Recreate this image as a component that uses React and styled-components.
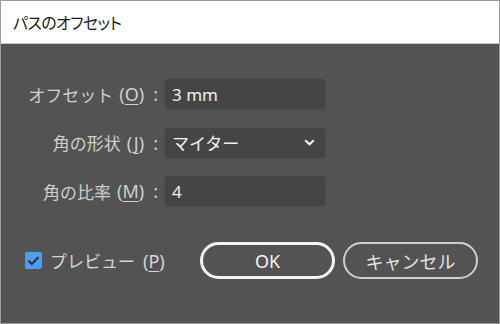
import React from 'react'
import styled, { createGlobalStyle } from 'styled-components'

const GlobalStyle = createGlobalStyle`
  html, body {
    margin: 0;
    padding: 0;
    background: #535353;
  }
  body {
    font-family: "Noto Sans", "Noto Sans CJK JP", sans-serif;
  }
`

const Window = styled.div`
  width: 500px;
  height: 324px;
  box-sizing: border-box;
  border: 1px solid #9b9b9b;
  display: flex;
  flex-direction: column;
  background: #535353;
`

const TitleBar = styled.div`
  height: 42px;
  flex: none;
  background: #ffffff;
  border-bottom: 1px solid #c4c4c4;
  display: flex;
  align-items: center;
  padding-left: 12px;
  font-size: 16px;
  font-feature-settings: "palt";
  letter-spacing: -0.6px;
  color: #1a1a1a;
`

const Body = styled.div`
  flex: 1;
  display: flex;
  flex-direction: column;
  padding-top: 34px;
`

const Form = styled.div`
  display: grid;
  grid-template-columns: 157px 162px;
  grid-auto-rows: 32px;
  column-gap: 6px;
  row-gap: 16.5px;
`

const Label = styled.div`
  display: flex;
  align-items: center;
  justify-content: flex-end;
  font-size: 17px;
  color: #cfcfcf;
  white-space: nowrap;
`

const Paren = styled.span`
  margin-left: ${p => p.$gap || 6}px;
  font-size: 18px;
`

const Key = styled.span`
  text-decoration: underline;
  text-underline-offset: 3px;
  text-decoration-thickness: 1px;
  text-decoration-skip-ink: none;
`

const Colon = styled.span`
  margin-left: 9px;
  font-size: 18px;
`

const Field = styled.div`
  box-sizing: border-box;
  display: flex;
  align-items: center;
  justify-content: space-between;
  padding: 0 10px 0 7px;
  background: #454545;
  border: 1px solid #4f4f4f;
  border-radius: 4px;
  font-size: 17px;
  color: #f2f2f2;
`

const Footer = styled.div`
  display: flex;
  align-items: center;
  justify-content: space-between;
  margin-top: 35px;
  padding: 0 21px 0 24px;
`

const Check = styled.label`
  display: flex;
  align-items: center;
  gap: 8px;
  font-size: 17px;
  color: #d6d6d6;
  white-space: nowrap;
`

const Box = styled.span`
  width: 17px;
  height: 17px;
  border-radius: 2px;
  background: #4b9ef2;
  display: flex;
  align-items: center;
  justify-content: center;
`

const Buttons = styled.div`
  display: flex;
  gap: 8px;
`

const Button = styled.button`
  box-sizing: border-box;
  width: 135px;
  height: 37px;
  border-radius: 19px;
  background: transparent;
  border: ${p => (p.$primary ? '3px solid #f4f4f4' : '2px solid #cfcfcf')};
  color: ${p => (p.$primary ? '#f4f4f4' : '#e2e2e2')};
  font-family: inherit;
  font-size: 18px;
  display: flex;
  align-items: center;
  justify-content: center;
  padding: 0;
`

function Chevron() {
  return (
    <svg width="11" height="7" viewBox="0 0 11 7">
      <path d="M1.2 1.2 L5.5 5.3 L9.8 1.2" fill="none" stroke="#f2f2f2" strokeWidth="2" />
    </svg>
  )
}

function Tick() {
  return (
    <svg width="13" height="11" viewBox="0 0 13 11">
      <path d="M1.5 5.8 L4.8 9 L11.5 2" fill="none" stroke="#2e3440" strokeWidth="2.2" />
    </svg>
  )
}

function FieldLabel({ text, mnemonic }) {
  return (
    <Label>
      {text}
      <Paren>(<Key>{mnemonic}</Key>)</Paren>
      <Colon>:</Colon>
    </Label>
  )
}

export default function App() {
  return (
    <>
      <GlobalStyle />
      <Window>
        <TitleBar>パスのオフセット</TitleBar>
        <Body>
          <Form>
            <FieldLabel text="オフセット" mnemonic="O" />
            <Field>3 mm</Field>
            <FieldLabel text="角の形状" mnemonic="J" />
            <Field>マイター<Chevron /></Field>
            <FieldLabel text="角の比率" mnemonic="M" />
            <Field>4</Field>
          </Form>
          <Footer>
            <Check>
              <Box><Tick /></Box>
              <span>プレビュー<Paren $gap={8}>(<Key>P</Key>)</Paren></span>
            </Check>
            <Buttons>
              <Button $primary>OK</Button>
              <Button>キャンセル</Button>
            </Buttons>
          </Footer>
        </Body>
      </Window>
    </>
  )
}
